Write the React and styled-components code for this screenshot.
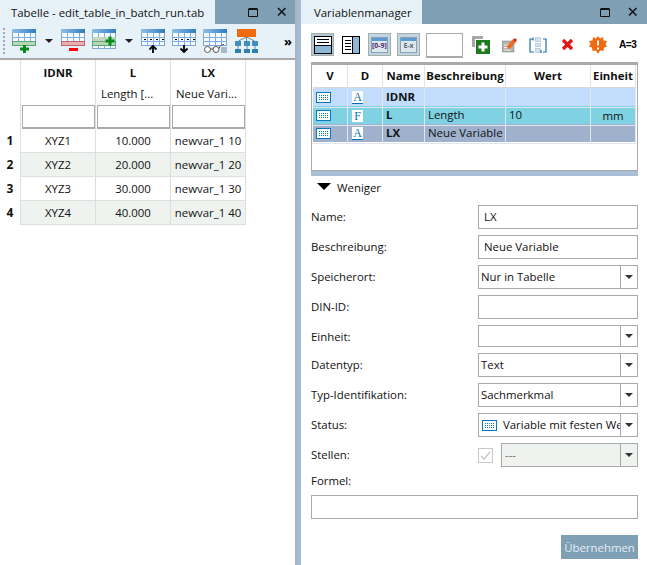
import React from "react";
import styled, { createGlobalStyle } from "styled-components";

const GlobalStyle = createGlobalStyle`
  html, body { margin: 0; padding: 0; }
  body {
    width: 647px;
    height: 565px;
    overflow: hidden;
    background: #a3bcd6;
    font-family: "Open Sans", "Noto Sans", sans-serif;
    font-size: 11.4px;
    color: #111;
  }
  svg { flex: none; }
`;

const Page = styled.div`
  display: flex;
  width: 647px;
  height: 565px;
`;

const LeftPanel = styled.section`
  width: 295px;
  flex: none;
  background: #fff;
  border-right: 2px solid #aab4c0;
  display: flex;
  flex-direction: column;
`;

const RightPanel = styled.section`
  width: 346px;
  margin-left: 4px;
  flex: none;
  background: #fff;
  display: flex;
  flex-direction: column;
`;

const TitleBar = styled.header`
  height: 24px;
  flex: none;
  display: flex;
  background: #7f9fb5;
`;

const TitleTab = styled.div`
  width: ${(p) => p.$width}px;
  padding-left: ${(p) => p.$pad}px;
  box-sizing: border-box;
  background: #e6f1f8;
  line-height: 25px;
  white-space: nowrap;
`;

const WindowButtons = styled.div`
  margin-left: auto;
  display: flex;
  align-items: center;
  gap: ${(p) => p.$gap}px;
  padding-right: ${(p) => p.$right}px;
`;

const LeftToolbar = styled.div`
  height: 36px;
  flex: none;
  box-sizing: border-box;
  display: flex;
  align-items: center;
  padding-left: 3px;
  background: #e6f1f8;
  border-bottom: 2px solid #aaa;
`;

const Grip = styled.div`
  width: 2px;
  height: 27px;
  margin-right: 7px;
  background: repeating-linear-gradient(#9fa9b0 0 2px, transparent 2px 4px);
`;

const ToolSlot = styled.div`
  width: ${(p) => p.$w}px;
  margin-left: ${(p) => p.$ml || 0}px;
  flex: none;
  display: flex;
  align-items: center;
  justify-content: center;
`;

const Overflow = styled.span`
  margin-left: 25px;
  font-weight: 700;
  font-size: 13px;
  line-height: 13px;
  color: #000;
`;

const DataGrid = styled.div`
  display: grid;
  grid-template-columns: 76px 75px 75px;
  margin-left: 20px;
  width: 226px;
`;

const RowNumber = styled.div`
  position: absolute;
  left: -20px;
  width: 20px;
  text-align: center;
  padding-right: 2px;
  box-sizing: border-box;
  font-weight: 700;
  font-size: 12px;
  line-height: 24px;
`;

const HeadCell = styled.div`
  height: 23px;
  line-height: 25px;
  text-align: center;
  font-weight: 700;
  border-right: 1px solid #dedede;
  border-left: ${(p) => (p.$first ? "1px solid #dedede" : "none")};
`;

const DescCell = styled.div`
  height: 22px;
  line-height: 21px;
  padding-left: 5px;
  box-sizing: border-box;
  white-space: nowrap;
  border-right: 1px solid #dedede;
  border-left: ${(p) => (p.$first ? "1px solid #dedede" : "none")};
`;

const FilterCell = styled.div`
  height: 24px;
  box-sizing: border-box;
  padding: 0 0 0 1px;
  border-right: 1px solid #dedede;
  border-left: ${(p) => (p.$first ? "1px solid #dedede" : "none")};
`;

const FilterBox = styled.div`
  height: 24px;
  box-sizing: border-box;
  background: #fff;
  border: 1px solid #aaa;
  border-bottom-width: 2px;
`;

const DataCell = styled.div`
  position: relative;
  height: 24px;
  box-sizing: border-box;
  line-height: 24px;
  text-align: center;
  white-space: nowrap;
  background: ${(p) => (p.$alt ? "#eef3ef" : "#fff")};
  border-right: 1px solid #dedede;
  border-bottom: 1px solid #dedede;
  border-left: ${(p) => (p.$first ? "1px solid #dedede" : "none")};
`;

const RightToolbar = styled.div`
  height: 38px;
  flex: none;
  box-sizing: border-box;
  padding: 9px 0 0 10px;
  display: flex;
  align-items: flex-start;
`;

const ModeButton = styled.button`
  width: 23px;
  height: 23px;
  padding: 0;
  flex: none;
  margin-right: ${(p) => p.$mr}px;
  display: flex;
  align-items: center;
  justify-content: center;
  background: ${(p) => (p.$on ? "#b5c6d6" : "#c4d3e0")};
  border: 1px solid #a3afa9;
  font-family: inherit;
`;

const PlainIcon = styled.div`
  flex: none;
  width: ${(p) => (p.$w ? `${p.$w}px` : "auto")};
  height: 23px;
  display: flex;
  align-items: center;
  margin-left: ${(p) => p.$ml}px;
`;

const EvalText = styled.span`
  font-family: "Liberation Sans", sans-serif;
  font-weight: 700;
  font-size: 10px;
  letter-spacing: -0.4px;
  color: #000;
`;

const ModeLabel = styled.span`
  width: 17px;
  height: 16px;
  box-sizing: border-box;
  background: linear-gradient(#5b9bd5 0 3px, #dfe7ee 3px);
  border: 1px solid #8aa0b5;
  font-size: 7px;
  font-weight: 700;
  line-height: 13px;
  padding-top: 1px;
  text-align: center;
  color: ${(p) => p.$tone};
  white-space: nowrap;
`;

const SearchBox = styled.div`
  width: 37px;
  height: 25px;
  flex: none;
  box-sizing: border-box;
  border: 1px solid #aaa;
  border-bottom-width: 2px;
  background: #fff;
  margin-left: -1px;
`;

const VarTable = styled.div`
  flex: none;
  margin: 0 9px 0 10px;
  height: 109px;
  box-sizing: border-box;
  padding: 0 2px 0 1px;
  background: #fff;
  border-top: 3px solid #aaa;
  border-bottom: 1px solid #aaa;
  border-left: 1px solid #aaa;
  border-right: 1px solid #aaa;
`;

const VarRow = styled.div`
  display: grid;
  grid-template-columns: 35px 35px 42px 81px 85px 45px;
  height: 18px;
  background: ${(p) => p.$bg || "#fff"};
  line-height: 17px;
`;

const VarHeaderRow = styled(VarRow)`
  height: 23px;
  line-height: 22px;
  font-weight: 700;
  text-align: center;
`;

const VarHead = styled.div`
  white-space: nowrap;
  border-right: 1px solid #e2e2e2;
  border-bottom: 1px solid #d8d8d8;
`;

const VarCell = styled.div`
  position: relative;
  box-sizing: border-box;
  padding-left: ${(p) => p.$pad || 0}px;
  padding-bottom: ${(p) => (p.$raise ? 2 : 0)}px;
  border-right: 1px solid #dfe6ee;
  border-bottom: 1px solid #dfe6ee;
  font-weight: ${(p) => (p.$bold ? 700 : 400)};
  display: flex;
  align-items: center;
  justify-content: ${(p) => (p.$center ? "center" : "flex-start")};
  white-space: nowrap;
`;

const TypeLetter = styled.span`
  font-family: "Liberation Serif", serif;
  font-size: 12px;
  line-height: 12px;
  width: 11px;
  height: 12px;
  background: #fff;
  color: #0a6fb5;
  text-align: center;
  border-bottom: ${(p) => (p.$under ? "1px solid #0a6fb5" : "none")};
`;

const Strip = styled.div`
  height: 5px;
  margin: 0 9px 0 10px;
  flex: none;
  background: #a9bfd6;
`;

const Toggle = styled.div`
  display: flex;
  align-items: center;
  gap: 6px;
  height: 23px;
  margin-left: 16px;
  flex: none;
`;

const Caret = styled.span`
  width: 0;
  height: 0;
  border-left: 7px solid transparent;
  border-right: 7px solid transparent;
  border-top: 7px solid #000;
  margin-top: -3px;
`;

const Form = styled.form`
  display: grid;
  grid-template-columns: 167px 160px;
  row-gap: 6px;
  margin: 6px 0 0 10px;
  width: 327px;
  grid-auto-rows: min-content;
`;

const Label = styled.label`
  height: ${(p) => p.$h || 24}px;
  line-height: 23px;
`;

const TextBox = styled.div`
  height: 24px;
  box-sizing: border-box;
  border: 1px solid #aaa;
  background: #fff;
  padding-left: 5px;
  line-height: 22px;
`;

const Combo = styled.div`
  height: ${(p) => p.$h || 24}px;
  box-sizing: border-box;
  display: flex;
  border: 1px solid #aaa;
  background: ${(p) => (p.$off ? "#eef3ef" : "#fff")};
  line-height: 22px;
  overflow: hidden;
`;

const ComboText = styled.div`
  flex: 1;
  min-width: 0;
  display: flex;
  align-items: center;
  gap: 6px;
  padding-left: ${(p) => p.$pad || 2}px;
  white-space: nowrap;
  overflow: hidden;
  color: ${(p) => (p.$muted ? "#7d6a6a" : "inherit")};
`;

const ComboArrow = styled.div`
  width: 16px;
  flex: none;
  border-left: 1px solid #aaa;
  display: flex;
  align-items: center;
  justify-content: center;
  &::after {
    content: "";
    border-left: 4px solid transparent;
    border-right: 4px solid transparent;
    border-top: 4px solid #333;
  }
`;

const StellenRow = styled.div`
  display: flex;
  align-items: center;
`;

const CheckMark = styled.div`
  width: 13px;
  height: 13px;
  flex: none;
  margin-right: 8px;
  border: 1px solid #c8c8c8;
  display: flex;
  align-items: center;
  justify-content: center;
`;

const StellenCombo = styled(Combo)`
  flex: 1;
`;

const FormulaLabel = styled(Label)`
  grid-column: 1 / -1;
  margin-top: -4px;
  height: 20px;
`;

const FormulaBox = styled(TextBox)`
  grid-column: 1 / -1;
`;

const ApplyRow = styled.div`
  grid-column: 1 / -1;
  display: flex;
  justify-content: flex-end;
  margin-top: 10px;
`;

const ApplyButton = styled.button`
  width: 77px;
  height: 24px;
  padding: 0;
  border: none;
  background: #7f9fb5;
  color: #e4eef4;
  font-family: inherit;
  font-size: 11.4px;
`;

const WinIcons = () => (
  <>
    <svg width="10" height="10" viewBox="0 0 10 10">
      <path d="M.5 1.500h9M.5 2.500h9M.5 2v7.500h9V2" fill="none" stroke="#111" strokeWidth="1" />
    </svg>
    <svg width="12" height="10" viewBox="0 0 12 10">
      <path d="M2 1l7.500 7.500M9.500 1L2 8.500" fill="none" stroke="#111" strokeWidth="1.500" />
    </svg>
  </>
);

const Sheet = ({ height = 17, children }) => (
  <svg width="24" height="24" viewBox="0 0 24 24">
    <defs>
      <linearGradient id="sheetHead" x1="0" x2="1">
        <stop offset="0" stopColor="#8fc0e8" />
        <stop offset="1" stopColor="#2f7cc0" />
      </linearGradient>
    </defs>
    <rect x="0.500" y="0.500" width="23" height={height - 1} fill="#f6fafd" stroke="#7fa8cc" />
    <rect x="0" y="0" width="24" height="4" fill="url(#sheetHead)" />
    <path
      d={`M0 8.500h24M0 12.500h24${height > 17 ? "M0 16.500h24" : ""}M6.500 4v${height - 4}M12.500 4v${height - 4}M18.500 4v${height - 4}`}
      stroke="#7fb0dc"
      fill="none"
    />
    {children}
  </svg>
);

const Dots = ({ y }) => (
  <path d={`M3 ${y}h2M9 ${y}h2M15 ${y}h2M21 ${y}h2`} stroke="#000" fill="none" />
);

const TOOLBAR_ICONS = {
  add: (
    <Sheet>
      <rect x="0.500" y="12.500" width="23" height="4" fill="#b7d8b4" stroke="#1f8a2c" strokeDasharray="1 1" />
      <path d="M12.500 16v8M8 20h9" stroke="#0a8a1e" strokeWidth="3" fill="none" />
    </Sheet>
  ),
  remove: (
    <Sheet>
      <rect x="0.500" y="12.500" width="23" height="4" fill="#e4b0b0" stroke="#d41a1a" strokeDasharray="1 1" />
      <rect x="8" y="19" width="9" height="3" fill="#f00" />
    </Sheet>
  ),
  insert: (
    <Sheet height={20}>
      <rect x="0.500" y="8" width="23" height="4" fill="#c4d8c0" />
      <rect x="0.500" y="12.500" width="23" height="4" fill="#b7d8b4" stroke="#1f8a2c" strokeDasharray="1 1" />
      <path d="M18 7.500v9M13.500 12h9" stroke="#0a8a1e" strokeWidth="3" fill="none" />
    </Sheet>
  ),
  up: (
    <Sheet>
      <Dots y={10.5} />
      <path d="M12 24v-7M8.500 20.500L12 17l3.500 3.500" stroke="#000" strokeWidth="1.800" fill="none" />
    </Sheet>
  ),
  down: (
    <Sheet>
      <Dots y={10.5} />
      <path d="M12 16v7M8.500 19.500L12 23l3.500-3.500" stroke="#000" strokeWidth="1.800" fill="none" />
    </Sheet>
  ),
  view: (
    <Sheet>
      <rect x="18" y="18" width="6" height="6" fill="#a9b9c6" />
      <circle cx="4.500" cy="20.500" r="3" fill="#fff" stroke="#555" />
      <circle cx="13" cy="20.500" r="3" fill="#fff" stroke="#555" />
      <path d="M7.500 20h2.500M16 19.500c1-3 3-4 5-4" stroke="#555" fill="none" />
    </Sheet>
  ),
};

const TreeIcon = () => (
  <svg width="24" height="24" viewBox="0 0 24 24">
    <rect x="2" y="0" width="19" height="8" fill="#f06a10" />
    <path d="M11.500 8v8M3.500 12l8-4 8 4" stroke="#6a8aa0" fill="none" />
    {[0, 9, 17].map((x) => (
      <rect key={x} x={x} y="12" width="6" height="5" fill="#3f8fc0" />
    ))}
    {[0, 9, 17].map((x) => (
      <rect key={x} x={x} y="20" width="6" height="4" fill="#2f7fb0" />
    ))}
    <path d="M3 17v3M12 17v3M20 17v3" stroke="#6a8aa0" fill="none" />
  </svg>
);

const SmallCaret = () => (
  <svg width="8" height="4" viewBox="0 0 8 4">
    <path d="M0 0h8L4 4z" fill="#222" />
  </svg>
);

const KeyboardIcon = () => (
  <svg width="15" height="11" viewBox="0 0 15 11">
    <rect x="0.500" y="0.500" width="14" height="10" fill="#fff" stroke="#0a78c0" />
    <path d="M3 3.500h9M3 5.500h9M3 7.500h9" stroke="#0a78c0" strokeDasharray="1 1" fill="none" />
  </svg>
);

const LayoutIcon = ({ side }) => (
  <svg width="18" height="18" viewBox="0 0 18 18">
    <rect x="0.500" y="0.500" width="17" height="17" fill="#fff" stroke="#000" />
    {side ? (
      <>
        <rect x="11" y="1" width="6" height="16" fill="#8fb8d6" />
        <path d="M10.500 1v16M3 4.500h6M3 7.500h6M3 10.500h6M3 13.500h6" stroke="#000" fill="none" />
      </>
    ) : (
      <>
        <rect x="1" y="10" width="16" height="7" fill="#8fb8d6" />
        <path d="M1 9.500h16M3 3.500h12M3 6.500h12" stroke="#000" fill="none" />
      </>
    )}
  </svg>
);

const AddVarIcon = () => (
  <svg width="18" height="18" viewBox="0 0 18 18">
    <path d="M0 0h11v3H3v8H0z" fill="#a8a8a8" />
    <rect x="4" y="4" width="14" height="14" fill="#1f7a1f" />
    <path d="M11 6.500v9M6.500 11h9" stroke="#fff" strokeWidth="3" fill="none" />
  </svg>
);

const EditIcon = () => (
  <svg width="16" height="16" viewBox="0 0 16 16">
    <rect x="0" y="4" width="12" height="11" fill="#b0b4ac" stroke="#777" strokeWidth="0.500" />
    <path d="M2 8h6M2 10.500h5M2 13h7" stroke="#f0f0f0" fill="none" />
    <path d="M6 11l7-8" stroke="#ef6a20" strokeWidth="4" fill="none" />
    <path d="M12 4l2-2" stroke="#d03030" strokeWidth="3" fill="none" />
  </svg>
);

const MoveIcon = () => (
  <svg width="18" height="18" viewBox="0 0 18 18">
    <path d="M4 3H1v13h4M14 3h3v13h-3" stroke="#1f6fb0" strokeWidth="1.200" fill="none" />
    <path d="M6.500 1.500h5v4h-5zM6.500 7.500h5v3h-5zM6.500 12.500h5v4h-5z" fill="#d4e2ee" stroke="#90b0cc" strokeDasharray="1 1" />
    <path d="M4 1.500v3M12 14v3" stroke="#1f6fb0" strokeWidth="1.200" fill="none" />
  </svg>
);

const DeleteIcon = () => (
  <svg width="13" height="13" viewBox="0 0 13 13">
    <path d="M2 2l9 9M11 2l-9 9" stroke="#e01818" strokeWidth="3.400" fill="none" />
  </svg>
);

const GearIcon = () => (
  <svg width="18" height="18" viewBox="0 0 18 18">
    <path
      d="M9 0l2 2.500L14 1l.5 3.500L18 5l-1.500 3L18 10.500l-3 1L14.500 15 11 14.500 9 18l-2-3.500-3.500.5L3 11.500l-3-1L1.500 8 0 5l3.500-.5L4 1l3 1.500z"
      fill="#f06a10"
    />
    <path d="M9 4.500v5M9 11.500v2" stroke="#fff" strokeWidth="2" fill="none" />
  </svg>
);

const columns = ["IDNR", "L", "LX"];
const descriptions = ["", "Length [...", "Neue Vari..."];
const rows = [
  ["XYZ1", "10.000", "newvar_1 10"],
  ["XYZ2", "20.000", "newvar_1 20"],
  ["XYZ3", "30.000", "newvar_1 30"],
  ["XYZ4", "40.000", "newvar_1 40"],
];

const variables = [
  { bg: "#c1ddfb", letter: "A", under: true, name: "IDNR", desc: "", value: "", unit: "" },
  { bg: "#7fd2e1", letter: "F", name: "L", desc: "Length", value: "10", unit: "mm" },
  { bg: "#9fb1cc", letter: "A", under: true, name: "LX", desc: "Neue Variable", value: "", unit: "" },
];

export default function App() {
  return (
    <Page>
      <GlobalStyle />
      <LeftPanel>
        <TitleBar>
          <TitleTab $width={215} $pad={11}>Tabelle - edit_table_in_batch_run.tab</TitleTab>
          <WindowButtons $gap={18} $right={7}><WinIcons /></WindowButtons>
        </TitleBar>
        <LeftToolbar>
          <Grip />
          <ToolSlot $w={24}>{TOOLBAR_ICONS.add}</ToolSlot>
          <ToolSlot $w={25}><SmallCaret /></ToolSlot>
          <ToolSlot $w={24}>{TOOLBAR_ICONS.remove}</ToolSlot>
          <ToolSlot $w={24} $ml={7}>{TOOLBAR_ICONS.insert}</ToolSlot>
          <ToolSlot $w={25}><SmallCaret /></ToolSlot>
          <ToolSlot $w={24}>{TOOLBAR_ICONS.up}</ToolSlot>
          <ToolSlot $w={24} $ml={7}>{TOOLBAR_ICONS.down}</ToolSlot>
          <ToolSlot $w={24} $ml={7}>{TOOLBAR_ICONS.view}</ToolSlot>
          <ToolSlot $w={24} $ml={8}><TreeIcon /></ToolSlot>
          <Overflow>»</Overflow>
        </LeftToolbar>
        <DataGrid>
          {columns.map((c, i) => <HeadCell key={c} $first={i === 0}>{c}</HeadCell>)}
          {descriptions.map((d, i) => <DescCell key={i} $first={i === 0}>{d}</DescCell>)}
          {columns.map((c, i) => (
            <FilterCell key={c} $first={i === 0}><FilterBox /></FilterCell>
          ))}
          {rows.map((row, r) =>
            row.map((v, i) => (
              <DataCell key={v} $first={i === 0} $alt={r % 2 === 1}>
                {i === 0 && <RowNumber>{r + 1}</RowNumber>}
                {v}
              </DataCell>
            )),
          )}
        </DataGrid>
      </LeftPanel>

      <RightPanel>
        <TitleBar>
          <TitleTab $width={121} $pad={13}>Variablenmanager</TitleTab>
          <WindowButtons $gap={17} $right={8}><WinIcons /></WindowButtons>
        </TitleBar>
        <RightToolbar>
          <ModeButton $on $mr={8}><LayoutIcon /></ModeButton>
          <PlainIcon $ml={0} $w={26}><LayoutIcon side /></PlainIcon>
          <ModeButton $mr={6}><ModeLabel $tone="#4a2a6a">[0-9]</ModeLabel></ModeButton>
          <ModeButton $mr={7}><ModeLabel $tone="#5a6a70">E-x</ModeLabel></ModeButton>
          <SearchBox />
          <PlainIcon $ml={9}><AddVarIcon /></PlainIcon>
          <PlainIcon $ml={12}><EditIcon /></PlainIcon>
          <PlainIcon $ml={11}><MoveIcon /></PlainIcon>
          <PlainIcon $ml={14}><DeleteIcon /></PlainIcon>
          <PlainIcon $ml={15}><GearIcon /></PlainIcon>
          <PlainIcon $ml={12}><EvalText>A=3</EvalText></PlainIcon>
        </RightToolbar>
        <VarTable>
          <VarHeaderRow>
            {["V", "D", "Name", "Beschreibung", "Wert", "Einheit"].map((h) => (
              <VarHead key={h}>{h}</VarHead>
            ))}
          </VarHeaderRow>
          {variables.map((v) => (
            <VarRow key={v.name} $bg={v.bg}>
              <VarCell $pad={3}><KeyboardIcon /></VarCell>
              <VarCell $pad={4}><TypeLetter $under={v.under}>{v.letter}</TypeLetter></VarCell>
              <VarCell $pad={3} $bold $raise>{v.name}</VarCell>
              <VarCell $pad={3} $raise>{v.desc}</VarCell>
              <VarCell $pad={3} $raise>{v.value}</VarCell>
              <VarCell $center>{v.unit}</VarCell>
            </VarRow>
          ))}
        </VarTable>
        <Strip />
        <Toggle><Caret />Weniger</Toggle>
        <Form>
          <Label>Name:</Label>
          <TextBox>LX</TextBox>
          <Label>Beschreibung:</Label>
          <TextBox>Neue Variable</TextBox>
          <Label>Speicherort:</Label>
          <Combo><ComboText>Nur in Tabelle</ComboText><ComboArrow /></Combo>
          <Label>DIN-ID:</Label>
          <TextBox />
          <Label $h={22}>Einheit:</Label>
          <Combo $h={22}><ComboText /><ComboArrow /></Combo>
          <Label>Datentyp:</Label>
          <Combo><ComboText>Text</ComboText><ComboArrow /></Combo>
          <Label>Typ-Identifikation:</Label>
          <Combo><ComboText>Sachmerkmal</ComboText><ComboArrow /></Combo>
          <Label>Status:</Label>
          <Combo>
            <ComboText $pad={3}><KeyboardIcon />Variable mit festen Werten</ComboText>
            <ComboArrow />
          </Combo>
          <Label>Stellen:</Label>
          <StellenRow>
            <CheckMark>
              <svg width="11" height="11" viewBox="0 0 11 11">
                <path d="M1 6l3 3 6-7" stroke="#c4c4c4" strokeWidth="1.200" fill="none" />
              </svg>
            </CheckMark>
            <StellenCombo $off><ComboText $muted $pad={3}>---</ComboText><ComboArrow /></StellenCombo>
          </StellenRow>
          <FormulaLabel>Formel:</FormulaLabel>
          <FormulaBox />
          <ApplyRow><ApplyButton type="button">Übernehmen</ApplyButton></ApplyRow>
        </Form>
      </RightPanel>
    </Page>
  );
}
